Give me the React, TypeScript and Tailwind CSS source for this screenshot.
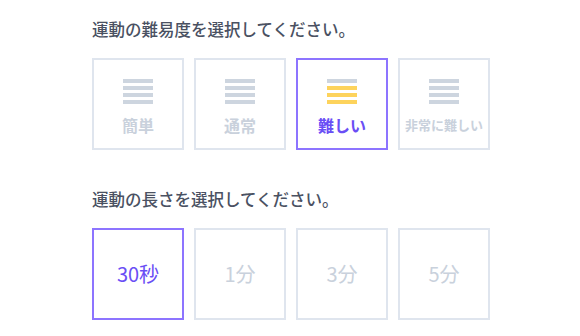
import React, { useState } from "react";

const font = { fontFamily: '"Noto Sans CJK JP", "Noto Sans", sans-serif' };

const levels = ["簡単", "通常", "難しい", "非常に難しい"];
const lengths = ["30秒", "1分", "3分", "5分"];

const Bars = ({ level, active }: { level: number; active: boolean }) => (
  <div className="flex flex-col gap-[3px]">
    {[0, 1, 2, 3].map((i) => (
      <div
        key={i}
        className={
          active && i >= 3 - level
            ? "h-[4px] w-[30px] bg-[#fdd35c]"
            : "h-[4px] w-[30px] bg-[#cdd5df]"
        }
      />
    ))}
  </div>
);

export default function App() {
  const [level, setLevel] = useState(2);
  const [length, setLength] = useState(0);

  return (
    <div className="h-[336px] w-[580px] bg-white pl-[92px] pt-[17px]" style={font}>
      <h2 className="text-[16.5px] font-medium leading-6 text-[#4a5162]">
        運動の難易度を選択してください。
      </h2>
      <div className="mt-[17px] flex gap-[10px]">
        {levels.map((name, i) => {
          const active = i === level;
          return (
            <button
              key={name}
              onClick={() => setLevel(i)}
              className={
                active
                  ? "flex h-[92px] w-[92px] flex-col items-center gap-[13px] border-2 border-[#8d74ff] pt-[19px]"
                  : "flex h-[92px] w-[92px] flex-col items-center gap-[13px] border-2 border-[#dfe5ee] pt-[19px]"
              }
            >
              <Bars level={i} active={active} />
              <span
                className={
                  (i === 3 ? "text-[13px] " : "text-[16px] ") +
                  "font-bold leading-4 " +
                  (active ? "text-[#6a4ef5]" : "text-[#c9d1dc]")
                }
              >
                {name}
              </span>
            </button>
          );
        })}
      </div>

      <h2 className="mt-[37px] text-[16.5px] font-medium leading-6 text-[#4a5162]">
        運動の長さを選択してください。
      </h2>
      <div className="mt-[17px] flex gap-[10px]">
        {lengths.map((name, i) => {
          const active = i === length;
          return (
            <button
              key={name}
              onClick={() => setLength(i)}
              className={
                active
                  ? "flex h-[92px] w-[92px] items-center justify-center border-2 border-[#8d74ff] text-[20px] font-normal text-[#6a4ef5]"
                  : "flex h-[92px] w-[92px] items-center justify-center border-2 border-[#dfe5ee] text-[20px] font-normal text-[#c9d1dc]"
              }
            >
              {name}
            </button>
          );
        })}
      </div>
    </div>
  );
}
